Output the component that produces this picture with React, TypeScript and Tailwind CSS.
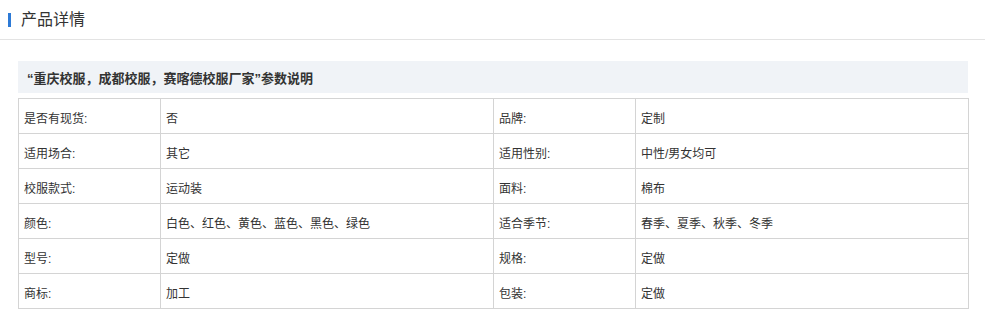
import React from "react";

const rows: [string, string, string, string][] = [
  ["是否有现货:", "否", "品牌:", "定制"],
  ["适用场合:", "其它", "适用性别:", "中性/男女均可"],
  ["校服款式:", "运动装", "面料:", "棉布"],
  ["颜色:", "白色、红色、黄色、蓝色、黑色、绿色", "适合季节:", "春季、夏季、秋季、冬季"],
  ["型号:", "定做", "规格:", "定做"],
  ["商标:", "加工", "包装:", "定做"],
];

export default function App() {
  return (
    <div
      className="w-[985px] h-[328px] bg-white text-[#333]"
      style={{ fontFamily: '"Liberation Sans", "Noto Sans CJK SC", sans-serif' }}
    >
      <div className="h-[40px] border-b border-[#e3e3e3] flex items-center pl-[8px]">
        <div className="w-[3px] h-[14px] bg-[#2d7ad6]" />
        <div className="ml-[10px] text-[16px] leading-none text-[#333]">产品详情</div>
      </div>
      <div className="pl-[18px] pr-[17px] pt-[21px]">
        <div className="h-[32px] bg-[#f0f3f7] flex items-center pl-[9px] pt-[3px] text-[13px] font-bold text-[#333]">
          “重庆校服，成都校服，赛喀德校服厂家”参数说明
        </div>
        <table className="mt-[5px] w-[950px] table-fixed border-collapse text-[12px]">
          <colgroup>
            <col className="w-[142px]" />
            <col className="w-[333px]" />
            <col className="w-[142px]" />
            <col className="w-[333px]" />
          </colgroup>
          <tbody>
            {rows.map((r, i) => (
              <tr key={i} className="h-[35px]">
                {r.map((c, j) => (
                  <td key={j} className="border border-[#d4d4d4] pl-[5px] pt-[5px] pb-0 align-middle">
                    {c}
                  </td>
                ))}
              </tr>
            ))}
          </tbody>
        </table>
      </div>
    </div>
  );
}
